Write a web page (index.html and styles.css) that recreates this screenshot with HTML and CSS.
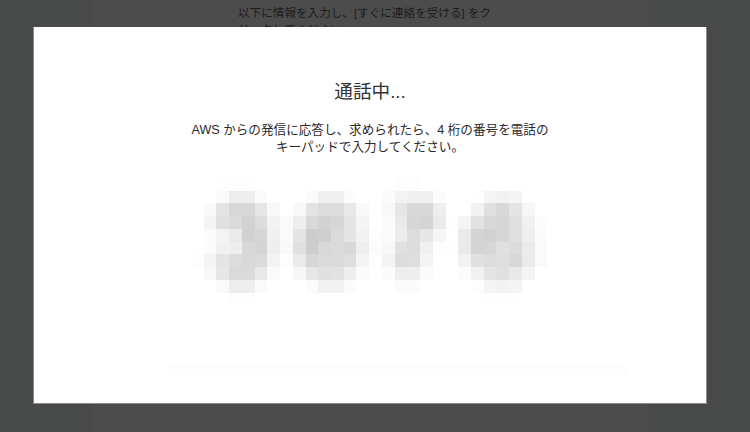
FILE: index.html
```html
<!DOCTYPE html>
<html lang="ja">
<head>
<meta charset="utf-8">
<title>通話中</title>
<link rel="stylesheet" href="styles.css">
</head>
<body>
<main class="page">
  <p class="intro">以下に情報を入力し、[すぐに連絡を受ける] をクリックしてください。</p>
</main>
<section class="modal">
  <h1 class="title">通話中...</h1>
  <p class="message">AWS からの発信に応答し、求められたら、4 桁の番号を電話の<br>キーパッドで入力してください。</p>
  <svg class="code" viewBox="0 0 28 10" shape-rendering="crispEdges" role="img" aria-label="ぼかされた 4 桁の番号">
    <rect x="2" y="0" fill="#fefefe"/><rect x="3" y="0" fill="#fdfdfd"/><rect x="4" y="0" fill="#fdfdfd"/><rect x="16" y="0" fill="#fdfdfd"/><rect x="17" y="0" fill="#fdfdfd"/>
    <rect x="2" y="1" fill="#fafafa"/><rect x="3" y="1" fill="#eeeeee"/><rect x="4" y="1" fill="#eeeeee"/><rect x="5" y="1" fill="#fafafa"/><rect x="9" y="1" fill="#fafafa"/><rect x="10" y="1" fill="#efefef"/><rect x="11" y="1" fill="#efefef"/><rect x="12" y="1" fill="#fbfbfb"/><rect x="15" y="1" fill="#fbfbfb"/><rect x="16" y="1" fill="#f3f3f3"/><rect x="17" y="1" fill="#f0f0f0"/><rect x="18" y="1" fill="#f0f0f0"/><rect x="19" y="1" fill="#fcfcfc"/><rect x="22" y="1" fill="#fefefe"/><rect x="23" y="1" fill="#f5f5f5"/><rect x="24" y="1" fill="#f1f1f1"/><rect x="25" y="1" fill="#f4f4f4"/>
    <rect x="1" y="2" fill="#f9f9f9"/><rect x="2" y="2" fill="#e3e3e3"/><rect x="3" y="2" fill="#d8d8d8"/><rect x="4" y="2" fill="#d8d8d8"/><rect x="5" y="2" fill="#e6e6e6"/><rect x="6" y="2" fill="#f8f8f8"/><rect x="8" y="2" fill="#f8f8f8"/><rect x="9" y="2" fill="#e3e3e3"/><rect x="10" y="2" fill="#dcdcdc"/><rect x="11" y="2" fill="#dcdcdc"/><rect x="12" y="2" fill="#e8e8e8"/><rect x="13" y="2" fill="#f9f9f9"/><rect x="15" y="2" fill="#f8f8f8"/><rect x="16" y="2" fill="#e6e6e6"/><rect x="17" y="2" fill="#d8d8d8"/><rect x="18" y="2" fill="#d8d8d8"/><rect x="19" y="2" fill="#eeeeee"/><rect x="22" y="2" fill="#f2f2f2"/><rect x="23" y="2" fill="#e0e0e0"/><rect x="24" y="2" fill="#d8d8d8"/><rect x="25" y="2" fill="#e4e4e4"/><rect x="26" y="2" fill="#f6f6f6"/>
    <rect x="1" y="3" fill="#f4f4f4"/><rect x="2" y="3" fill="#e0e0e0"/><rect x="3" y="3" fill="#dadada"/><rect x="4" y="3" fill="#d2d2d2"/><rect x="5" y="3" fill="#dcdcdc"/><rect x="6" y="3" fill="#f2f2f2"/><rect x="7" y="3" fill="#fafafa"/><rect x="8" y="3" fill="#eeeeee"/><rect x="9" y="3" fill="#d8d8d8"/><rect x="10" y="3" fill="#d2d2d2"/><rect x="11" y="3" fill="#d6d6d6"/><rect x="12" y="3" fill="#e4e4e4"/><rect x="13" y="3" fill="#f4f4f4"/><rect x="15" y="3" fill="#fbfbfb"/><rect x="16" y="3" fill="#eaeaea"/><rect x="17" y="3" fill="#d6d6d6"/><rect x="18" y="3" fill="#d4d4d4"/><rect x="19" y="3" fill="#eaeaea"/><rect x="20" y="3" fill="#fefefe"/><rect x="21" y="3" fill="#f4f4f4"/><rect x="22" y="3" fill="#e2e2e2"/><rect x="23" y="3" fill="#d8d8d8"/><rect x="24" y="3" fill="#d6d6d6"/><rect x="25" y="3" fill="#e0e0e0"/><rect x="26" y="3" fill="#f0f0f0"/><rect x="27" y="3" fill="#fcfcfc"/>
    <rect x="1" y="4" fill="#fbfbfb"/><rect x="2" y="4" fill="#f3f3f3"/><rect x="3" y="4" fill="#eaeaea"/><rect x="4" y="4" fill="#d2d2d2"/><rect x="5" y="4" fill="#d6d6d6"/><rect x="6" y="4" fill="#f0f0f0"/><rect x="7" y="4" fill="#fafafa"/><rect x="8" y="4" fill="#e4e4e4"/><rect x="9" y="4" fill="#cdcdcd"/><rect x="10" y="4" fill="#cfcfcf"/><rect x="11" y="4" fill="#dadada"/><rect x="12" y="4" fill="#e4e4e4"/><rect x="13" y="4" fill="#f2f2f2"/><rect x="14" y="4" fill="#fdfdfd"/><rect x="15" y="4" fill="#fbfbfb"/><rect x="16" y="4" fill="#ececec"/><rect x="17" y="4" fill="#dcdcdc"/><rect x="18" y="4" fill="#e6e6e6"/><rect x="19" y="4" fill="#f6f6f6"/><rect x="21" y="4" fill="#eaeaea"/><rect x="22" y="4" fill="#d4d4d4"/><rect x="23" y="4" fill="#d2d2d2"/><rect x="24" y="4" fill="#d6d6d6"/><rect x="25" y="4" fill="#e0e0e0"/><rect x="26" y="4" fill="#eeeeee"/><rect x="27" y="4" fill="#fbfbfb"/>
    <rect x="1" y="5" fill="#fbfbfb"/><rect x="2" y="5" fill="#f0f0f0"/><rect x="3" y="5" fill="#eeeeee"/><rect x="4" y="5" fill="#d8d8d8"/><rect x="5" y="5" fill="#d4d4d4"/><rect x="6" y="5" fill="#eeeeee"/><rect x="7" y="5" fill="#f9f9f9"/><rect x="8" y="5" fill="#e0e0e0"/><rect x="9" y="5" fill="#cdcdcd"/><rect x="10" y="5" fill="#d8d8d8"/><rect x="11" y="5" fill="#dadada"/><rect x="12" y="5" fill="#d8d8d8"/><rect x="13" y="5" fill="#eeeeee"/><rect x="14" y="5" fill="#fcfcfc"/><rect x="15" y="5" fill="#f8f8f8"/><rect x="16" y="5" fill="#e0e0e0"/><rect x="17" y="5" fill="#dcdcdc"/><rect x="18" y="5" fill="#f0f0f0"/><rect x="19" y="5" fill="#fefefe"/><rect x="20" y="5" fill="#fefefe"/><rect x="21" y="5" fill="#eaeaea"/><rect x="22" y="5" fill="#d4d4d4"/><rect x="23" y="5" fill="#d6d6d6"/><rect x="24" y="5" fill="#e0e0e0"/><rect x="25" y="5" fill="#dcdcdc"/><rect x="26" y="5" fill="#eaeaea"/><rect x="27" y="5" fill="#fafafa"/>
    <rect x="0" y="6" fill="#fdfdfd"/><rect x="1" y="6" fill="#f4f4f4"/><rect x="2" y="6" fill="#e4e4e4"/><rect x="3" y="6" fill="#dcdcdc"/><rect x="4" y="6" fill="#d8d8d8"/><rect x="5" y="6" fill="#dadada"/><rect x="6" y="6" fill="#f3f3f3"/><rect x="7" y="6" fill="#fdfdfd"/><rect x="8" y="6" fill="#eaeaea"/><rect x="9" y="6" fill="#d6d6d6"/><rect x="10" y="6" fill="#dadada"/><rect x="11" y="6" fill="#dadada"/><rect x="12" y="6" fill="#dedede"/><rect x="13" y="6" fill="#f4f4f4"/><rect x="14" y="6" fill="#fefefe"/><rect x="15" y="6" fill="#f4f4f4"/><rect x="16" y="6" fill="#dcdcdc"/><rect x="17" y="6" fill="#dedede"/><rect x="18" y="6" fill="#f4f4f4"/><rect x="21" y="6" fill="#f2f2f2"/><rect x="22" y="6" fill="#e0e0e0"/><rect x="23" y="6" fill="#dcdcdc"/><rect x="24" y="6" fill="#dedede"/><rect x="25" y="6" fill="#d8d8d8"/><rect x="26" y="6" fill="#eaeaea"/><rect x="27" y="6" fill="#fafafa"/>
    <rect x="1" y="7" fill="#f8f8f8"/><rect x="2" y="7" fill="#e6e6e6"/><rect x="3" y="7" fill="#dadada"/><rect x="4" y="7" fill="#dadada"/><rect x="5" y="7" fill="#e8e8e8"/><rect x="6" y="7" fill="#fafafa"/><rect x="8" y="7" fill="#f6f6f6"/><rect x="9" y="7" fill="#e6e6e6"/><rect x="10" y="7" fill="#e0e0e0"/><rect x="11" y="7" fill="#e2e2e2"/><rect x="12" y="7" fill="#eeeeee"/><rect x="13" y="7" fill="#fbfbfb"/><rect x="15" y="7" fill="#fbfbfb"/><rect x="16" y="7" fill="#eeeeee"/><rect x="17" y="7" fill="#eeeeee"/><rect x="18" y="7" fill="#fbfbfb"/><rect x="21" y="7" fill="#fcfcfc"/><rect x="22" y="7" fill="#f2f2f2"/><rect x="23" y="7" fill="#e4e4e4"/><rect x="24" y="7" fill="#e0e0e0"/><rect x="25" y="7" fill="#e8e8e8"/><rect x="26" y="7" fill="#f4f4f4"/>
    <rect x="2" y="8" fill="#fafafa"/><rect x="3" y="8" fill="#eeeeee"/><rect x="4" y="8" fill="#eeeeee"/><rect x="5" y="8" fill="#fafafa"/><rect x="9" y="8" fill="#fbfbfb"/><rect x="10" y="8" fill="#f1f1f1"/><rect x="11" y="8" fill="#f1f1f1"/><rect x="12" y="8" fill="#fbfbfb"/><rect x="16" y="8" fill="#fbfbfb"/><rect x="17" y="8" fill="#fbfbfb"/><rect x="22" y="8" fill="#fdfdfd"/><rect x="23" y="8" fill="#f4f4f4"/><rect x="24" y="8" fill="#f2f2f2"/><rect x="25" y="8" fill="#f4f4f4"/>
    <rect x="3" y="9" fill="#fdfdfd"/><rect x="4" y="9" fill="#fdfdfd"/><rect x="23" y="9" fill="#fefefe"/><rect x="24" y="9" fill="#fefefe"/><rect x="25" y="9" fill="#fefefe"/>
  </svg>
  <div class="band"></div>
</section>
</body>
</html>
```
FILE: styles.css
```css
html, body {
  margin: 0;
  height: 100%;
}

body {
  background: #474a48;
  overflow: hidden;
  font-family: "Liberation Sans", "Noto Sans CJK JP", sans-serif;
}

.page {
  width: 556px;
  height: 432px;
  margin-left: 92px;
  padding-left: 146px;
  box-sizing: border-box;
  background: #4c4c4c;
}

.intro {
  margin: 0;
  padding-top: 4px;
  width: 256px;
  font-size: 11.6px;
  line-height: 17px;
  color: #1c1c1c;
}

.modal {
  position: fixed;
  left: 33px;
  top: 27px;
  width: 674px;
  height: 377px;
  box-sizing: border-box;
  background: #fff;
  border-left: 1px solid #8a8a8a;
  border-bottom: 1px solid #8a8a8a;
  border-right: 1px solid #8a8a8a;
  display: flex;
  flex-direction: column;
  align-items: center;
}

.title {
  margin: 52px 0 0;
  font-size: 18.6px;
  line-height: 26px;
  font-weight: 400;
  color: #333;
}

.message {
  margin: 17px 0 0;
  font-size: 12.6px;
  line-height: 17px;
  font-weight: 400;
  color: #2a2a2a;
  text-align: center;
}

.code {
  display: block;
  width: 356.4px;
  height: 127.3px;
  margin: 21.7px 0 0 156.7px;
  align-self: flex-start;
}

.code rect {
  width: 1px;
  height: 1px;
}

.band {
  align-self: flex-start;
  width: 458px;
  height: 13px;
  margin: 59px 0 0 134px;
  background: #fdfdfd;
}
```
